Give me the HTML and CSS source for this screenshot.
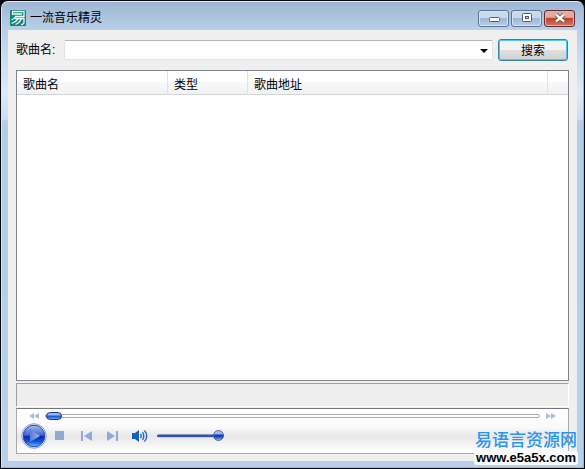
FILE: index.html
```html
<!DOCTYPE html>
<html lang="zh-CN">
<head>
<meta charset="utf-8">
<title>一流音乐精灵</title>
<link rel="stylesheet" href="styles.css">
</head>
<body>
<main class="window">
  <header class="titlebar">
    <svg class="app-icon" viewBox="0 0 16 16" aria-hidden="true">
      <rect width="16" height="16" rx="1" fill="#168477"/>
      <path d="M2 1.500H14V6.500H5M2.500 1.500V5M3 4H12M5.500 6.500Q4 9 1.500 10M5 8.500H14V12Q14 14.500 11 14.500M8.500 8.500Q6 12 1.500 13.500M11.500 8.500Q9.500 13 5.500 14.500" fill="none" stroke="#e9fffa" stroke-width="1.300"/>
    </svg>
    <h1 class="title">一流音乐精灵</h1>
    <div class="window-buttons">
      <button class="window-button" type="button" aria-label="最小化">
        <svg viewBox="0 0 16 12"><rect x="3.500" y="5.500" width="10" height="4" rx="1" fill="#fff" stroke="#535b69"/></svg>
      </button>
      <button class="window-button" type="button" aria-label="最大化">
        <svg viewBox="0 0 16 12"><rect x="3.500" y="1.500" width="9" height="8" rx="1" fill="#fff" stroke="#535b69"/><rect x="6.500" y="4.500" width="3" height="2" fill="#b4cbe4" stroke="#535b69"/></svg>
      </button>
      <button class="window-button close" type="button" aria-label="关闭">
        <svg viewBox="0 0 16 12"><path d="M4 2.500L12 9.500M12 2.500L4 9.500" stroke="#5d414b" stroke-width="4"/><path d="M4 2.500L12 9.500M12 2.500L4 9.500" stroke="#fff" stroke-width="2.400"/></svg>
      </button>
    </div>
  </header>
  <div class="client">
    <form class="search">
      <label for="song">歌曲名:</label>
      <div class="combo">
        <select id="song"><option></option></select>
        <svg class="combo-arrow" viewBox="0 0 8 4" aria-hidden="true"><path d="M0 0H8L4 4Z"/></svg>
      </div>
      <button class="search-button" type="button">搜索</button>
    </form>
    <section class="list">
      <table class="songs">
        <colgroup><col class="col-name"><col class="col-type"><col><col class="col-rest"></colgroup>
        <thead><tr><th>歌曲名</th><th>类型</th><th>歌曲地址</th><td></td></tr></thead>
      </table>
    </section>
    <div class="status"></div>
    <section class="player">
      <div class="seek-row">
        <button class="icon-button skip" type="button" aria-label="快退"><svg viewBox="0 0 10 6"><path d="M5 0V6L0 3ZM10 0V6L5 3Z" fill="#a9bddb"/></svg></button>
        <input class="seek" type="range" min="0" max="100" value="0" aria-label="进度">
        <button class="icon-button skip" type="button" aria-label="快进"><svg viewBox="0 0 10 6"><path d="M0 0V6L5 3ZM5 0V6L10 3Z" fill="#a9bddb"/></svg></button>
      </div>
      <div class="controls">
        <button class="icon-button play" type="button" aria-label="播放">
          <svg viewBox="0 0 26 26">
            <defs>
              <linearGradient id="orb" x2="0" y2="1"><stop offset="0" stop-color="#a9bdf0"/><stop offset=".46" stop-color="#3f63cf"/><stop offset=".52" stop-color="#0b2ba6"/><stop offset=".75" stop-color="#1551d8"/><stop offset="1" stop-color="#52ccff"/></linearGradient>
              <linearGradient id="arrow" x2="1"><stop offset="0" stop-color="#5578d2"/><stop offset="1" stop-color="#9db8ee"/></linearGradient>
            </defs>
            <circle cx="13" cy="13" r="12.300" fill="#f2f5fd" stroke="#8a9bcc"/>
            <circle cx="13" cy="13" r="10.800" fill="url(#orb)" stroke="#2546a8"/>
            <path d="M9 6V19L19 13Z" fill="url(#arrow)"/>
          </svg>
        </button>
        <button class="icon-button small" type="button" aria-label="停止"><svg viewBox="0 0 12 12"><rect x="1" y="1" width="9" height="9" fill="#8ea9d6"/></svg></button>
        <button class="icon-button small" type="button" aria-label="上一首"><svg viewBox="0 0 12 12"><path d="M1 1H3V11H1ZM12 1V11L4 6Z" fill="#8fabd8"/></svg></button>
        <button class="icon-button small" type="button" aria-label="下一首"><svg viewBox="0 0 12 12"><path d="M10 1H12V11H10ZM1 1V11L9 6Z" fill="#8fabd8"/></svg></button>
        <button class="icon-button sound" type="button" aria-label="静音"><svg viewBox="0 0 16 12"><path d="M0 3H3L7 0V12L3 9H0Z" fill="#1261bd"/><path d="M8.500 4Q10 6 8.500 8M10.500 2Q13 6 10.500 10M12.500 .500Q17 6 12.500 11.500" fill="none" stroke="#2768c6" stroke-width="1.400"/></svg></button>
        <input class="volume" type="range" min="0" max="100" value="100" aria-label="音量">
      </div>
    </section>
  </div>
  <a class="watermark" href="#"><span class="site-name">易语言资源网</span><span class="site-url">www.e5a5x.com</span></a>
</main>
</body>
</html>
```
FILE: styles.css
```css
* { box-sizing: border-box; }

body {
  margin: 0;
  min-height: 100vh;
  display: flex;
  padding: 1px;
  background: #05060a;
  color: #000;
  font: 12px/16px "Liberation Sans", "Noto Sans CJK SC", sans-serif;
}

button, select, input { font: inherit; margin: 0; padding: 0; }
svg { display: block; }

.window {
  position: relative;
  flex: 1;
  display: flex;
  flex-direction: column;
  padding: 0 6px 6px;
  border: 1px solid #5ad0ec;
  border-top-color: #e4edf7;
  border-left-color: #d9e8f8;
  border-radius: 7px 7px 0 0;
  background: linear-gradient(#9eb6d3 0, #b9d0e9 28px, #dceafa 90px, #cbddf3 117px, #b3cde9 119px, #b8d0ec);
}

.titlebar {
  display: flex;
  align-items: center;
  height: 28px;
  padding: 4px 2px 0;
}
.app-icon { width: 16px; height: 16px; }
.title { flex: 1; margin: 0 0 0 4px; font-size: 12px; font-weight: 400; }
.window-buttons { display: flex; gap: 2px; }
.window-button {
  display: grid;
  place-items: center;
  width: 31px;
  height: 17px;
  border: 1px solid #5c7392;
  border-radius: 3px;
  background: linear-gradient(#c8d9ed 0 45%, #9db7d5 50%, #b6cee8);
  box-shadow: inset 0 0 0 1px #d5e3f2;
}
.window-button svg { width: 16px; height: 12px; }
.window-button.close {
  border-color: #602a30;
  background: linear-gradient(#e4aa9e 0 42%, #bd4431 50%, #d5745c);
  box-shadow: inset 0 0 0 1px #e7b3a8;
}

.client {
  flex: 1;
  display: flex;
  flex-direction: column;
  padding: 8px 8px 7px;
  background: #efefef;
}

.search { display: flex; align-items: center; height: 24px; padding-right: 1px; }
.search label { width: 48px; white-space: nowrap; }
.combo { flex: 1; position: relative; height: 20px; margin-right: 5px; }
.combo select {
  display: block;
  width: 100%;
  height: 100%;
  appearance: none;
  border: 1px solid #e4e5e7;
  border-top-color: #b3b5b9;
  border-radius: 2px;
  background: #fff;
}
.combo-arrow {
  position: absolute;
  right: 5px;
  top: 9px;
  width: 8px;
  height: 4px;
  pointer-events: none;
}
.search-button {
  width: 70px;
  height: 22px;
  padding-top: 2px;
  border: 1px solid #38839c;
  border-radius: 3px;
  background: linear-gradient(#f3f3f3 0 48%, #dfdfdf 52%, #d1d1d1);
  box-shadow: inset 0 0 0 1px #48cbed;
}

.list {
  flex: 1;
  margin-top: 8px;
  border: 1px solid #80838a;
  background: #fff;
}
.songs { width: 100%; table-layout: fixed; border-collapse: separate; border-spacing: 0; }
.col-name { width: 151px; }
.col-type { width: 80px; }
.col-rest { width: 20px; }
.songs th, .songs td {
  height: 24px;
  padding: 4px 5px 0 6px;
  border-right: 1px solid #e0e3e8;
  border-bottom: 1px solid #d5d5d5;
  background: linear-gradient(#fff 0 45%, #f7f8fa 50%, #f1f2f4);
  font-weight: 400;
  text-align: left;
}
.songs td { border-right: 0; }

.status {
  height: 24px;
  margin-top: 2px;
  border: 1px solid #a0a0a0;
  border-right-color: #fff;
  border-bottom-color: #fff;
  background: #eee;
}

.player {
  height: 46px;
  margin-top: 1px;
  border: 1px solid #a9a9a9;
  border-top-color: #777;
  background: linear-gradient(#fff 0, #fafafa 40%, #e7e7e8 62%, #f7f7f7 85%, #fff);
}
.icon-button { display: block; border: 0; background: none; }
.icon-button svg { width: 100%; height: 100%; }
.seek-row { display: flex; align-items: center; height: 13px; padding: 0 12px; }
.skip { width: 10px; height: 6px; }
input[type="range"] { appearance: none; background: none; }
.seek { flex: 1; min-width: 0; height: 8px; margin: 0 6px; }
.seek::-webkit-slider-runnable-track {
  height: 4px;
  border: 1px solid #aaa;
  border-radius: 2px;
  background: #fff;
}
.seek::-webkit-slider-thumb {
  appearance: none;
  width: 16px;
  height: 8px;
  margin-top: -3px;
  border: 1px solid #1c3a93;
  border-radius: 4px;
  background: linear-gradient(#9cb4eb 0 35%, #194cc4 50%, #4fa8f5);
}

.controls { display: flex; align-items: center; height: 28px; padding-left: 4px; }
.play { width: 26px; height: 26px; margin-right: 7px; }
.small { width: 12px; height: 12px; margin-right: 14px; }
.sound { width: 16px; height: 12px; margin-right: 9px; }
.volume { width: 67px; height: 12px; }
.volume::-webkit-slider-runnable-track {
  height: 4px;
  border-radius: 2px;
  background: linear-gradient(#8f9bb5 0 1px, #2450cf 1px 3px, #c5d5f5 3px);
}
.volume::-webkit-slider-thumb {
  appearance: none;
  width: 11px;
  height: 11px;
  margin-top: -4px;
  border: 1px solid #4d68a8;
  border-radius: 50%;
  background: linear-gradient(#a4b8e9 0 30%, #173fae 45% 60%, #6fb4f3);
}

.watermark {
  position: absolute;
  right: 5px;
  bottom: 2px;
  display: flex;
  flex-direction: column;
  align-items: center;
  text-decoration: none;
}
.site-name {
  color: #2a94ee;
  font: 500 17px/24px "Noto Sans CJK SC", sans-serif;
}
.site-url {
  padding: 0 2px;
  border-radius: 3px;
  background: #f8fafc;
  color: #000;
  font: 700 13px/14px "Liberation Sans", sans-serif;
}
```
